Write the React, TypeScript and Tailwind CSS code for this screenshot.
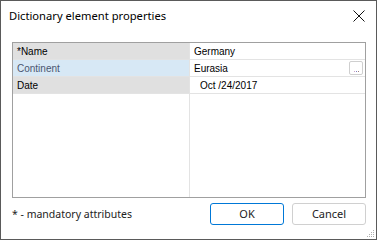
const rows = [
  { label: "*Name", value: "Germany", selected: false },
  { label: "Continent", value: "Eurasia", selected: true, button: true },
  { label: "Date", value: "Oct /24/2017", selected: false, date: true },
];

const App = () => {
  return (
    <div className="relative w-[377px] h-[240px] bg-white border border-[#5a5a5a] flex flex-col overflow-hidden">
      <div className="h-[30px] flex items-center justify-between pl-[8px] pr-[10px]">
        <span className="text-[11.2px] text-black" style={{ fontFamily: '"Noto Sans", sans-serif' }}>
          Dictionary element properties
        </span>
        <svg width="12" height="12" viewBox="0 0 12 12" className="mr-[1px]">
          <path d="M0.5 0.5 L11.5 11.5 M11.5 0.5 L0.5 11.5" stroke="#111" strokeWidth="1" />
        </svg>
      </div>

      <div
        className="mt-[11px] ml-[11px] w-[354px] h-[156px] border border-[#a0a0a0] flex flex-col text-[10px]"
        style={{ fontFamily: '"Liberation Sans", sans-serif' }}
      >
        {rows.map((r) => (
          <div key={r.label} className="flex h-[17px] border-b border-[#e3e3e3]">
            <div
              className={`w-[176px] pl-[4px] flex items-center ${
                r.selected ? "bg-[#d7e8f5] text-[#4a5670]" : "bg-[#e0e0e0] text-black"
              }`}
            >
              {r.label}
            </div>
            <div className="w-[1px] bg-[#e3e3e3]" />
            <div className={`flex-1 flex items-center justify-between text-black ${r.date ? "pl-[10px]" : "pl-[4px]"} pr-[2px]`}>
              <span>{r.value}</span>
              {r.button && (
                <div className="w-[14px] h-[14px] rounded-[2px] border border-[#cfcfcf] flex items-end justify-center pb-[2px] gap-[1px]">
                  <span className="w-[1px] h-[1px] bg-[#c8a0c8]" />
                  <span className="w-[1px] h-[1px] bg-[#8080c0]" />
                  <span className="w-[1px] h-[1px] bg-[#a08080]" />
                </div>
              )}
            </div>
          </div>
        ))}
        <div className="flex flex-1">
          <div className="w-[176px]" />
          <div className="w-[1px] bg-[#e3e3e3]" />
          <div className="flex-1" />
        </div>
      </div>

      <div className="flex items-center justify-between mt-[5px] pl-[11px] pr-[10px]">
        <span className="text-[10.5px] text-[#222] mt-[2px]" style={{ fontFamily: '"Noto Sans", sans-serif' }}>
          * - mandatory attributes
        </span>
        <div className="flex gap-[8px] text-[11px]" style={{ fontFamily: '"Noto Sans", sans-serif' }}>
          <button className="w-[74px] h-[22px] rounded-[3px] border border-[#0078d7] bg-white text-[#222] flex items-center justify-center">
            OK
          </button>
          <button className="w-[74px] h-[22px] rounded-[3px] border border-[#d0d0d0] bg-white text-[#222] flex items-center justify-center">
            Cancel
          </button>
        </div>
      </div>

      <svg className="absolute right-[1px] bottom-[1px]" width="10" height="10" viewBox="0 0 10 10">
        {[
          [8, 2],
          [6, 4],
          [8, 4],
          [4, 6],
          [6, 6],
          [8, 6],
          [2, 8],
          [4, 8],
          [6, 8],
          [8, 8],
        ].map(([x, y]) => (
          <rect key={`${x}-${y}`} x={x} y={y} width="1" height="1" fill="#b0b0b0" />
        ))}
      </svg>
    </div>
  );
};

export default App;
